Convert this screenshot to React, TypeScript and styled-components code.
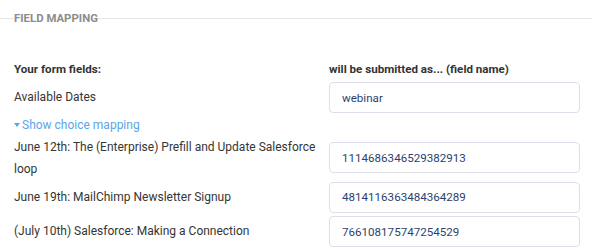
import { Fragment } from "react";
import styled, { createGlobalStyle } from "styled-components";

const GlobalStyle = createGlobalStyle`
  html, body {
    margin: 0;
    padding: 0;
    background: #ffffff;
  }
  body {
    font-family: Roboto, "Liberation Sans", Arial, sans-serif;
    -webkit-font-smoothing: antialiased;
  }
`;

const Styled_Fieldset = styled.fieldset`
  margin: 11px 0 0;
  padding: 0 12px 0 14px;
  border: none;
  border-top: 1px solid #e6e6e6;
  min-width: 0;
`;

const Styled_Legend = styled.legend`
  padding: 0;
  font-size: 11.4px;
  font-weight: 700;
  color: #8c8c8c;
  text-transform: uppercase;
  line-height: 14px;
`;

const Styled_Grid = styled.div`
  display: grid;
  grid-template-columns: 303px 251px;
  column-gap: 12px;
  margin-top: 37px;
`;

const Styled_HeadCell = styled.div`
  font-size: 11.6px;
  font-weight: 700;
  color: #333333;
  line-height: 14px;
  padding-bottom: 4px;
`;

const Styled_Label = styled.div`
  font-size: 12px;
  color: #353535;
  line-height: 22px;
  align-self: center;
`;

const Styled_InputCell = styled.div`
  padding: 2px 0 1.5px;
  align-self: center;
`;

const Styled_Input = styled.input`
  box-sizing: border-box;
  width: 100%;
  height: 31px;
  padding: 0 12px;
  border: 1px solid #dcdfe8;
  border-radius: 4px;
  font-family: inherit;
  font-size: 11.6px;
  color: #2e3f6b;
  background: #ffffff;
  outline: none;
`;

const Styled_Toggle = styled.div`
  grid-column: 1 / -1;
  display: flex;
  align-items: center;
  gap: 2px;
  font-size: 12px;
  color: #5ba4ea;
  line-height: 20px;
  padding: 0 0 1px;
`;

const Styled_Caret = styled.span`
  width: 0;
  height: 0;
  border-left: 3.5px solid transparent;
  border-right: 3.5px solid transparent;
  border-top: 4px solid #5ba4ea;
`;

interface Mapping {
  label: string;
  value: string;
}

const choices: Mapping[] = [
  { label: "June 12th: The (Enterprise) Prefill and Update Salesforce loop", value: "1114686346529382913" },
  { label: "June 19th: MailChimp Newsletter Signup", value: "4814116363484364289" },
  { label: "(July 10th) Salesforce: Making a Connection", value: "766108175747254529" }
];

export default function App(): JSX.Element {
  return (
    <>
      <GlobalStyle />
      <Styled_Fieldset>
        <Styled_Legend>Field Mapping</Styled_Legend>
        <Styled_Grid>
          <Styled_HeadCell>Your form fields:</Styled_HeadCell>
          <Styled_HeadCell>will be submitted as... (field name)</Styled_HeadCell>

          <Styled_Label>Available Dates</Styled_Label>
          <Styled_InputCell>
            <Styled_Input defaultValue="webinar" />
          </Styled_InputCell>

          <Styled_Toggle>
            <Styled_Caret />
            Show choice mapping
          </Styled_Toggle>

          {choices.map((choice) => (
            <Fragment key={choice.value}>
              <Styled_Label>{choice.label}</Styled_Label>
              <Styled_InputCell>
                <Styled_Input defaultValue={choice.value} />
              </Styled_InputCell>
            </Fragment>
          ))}
        </Styled_Grid>
      </Styled_Fieldset>
    </>
  );
}
